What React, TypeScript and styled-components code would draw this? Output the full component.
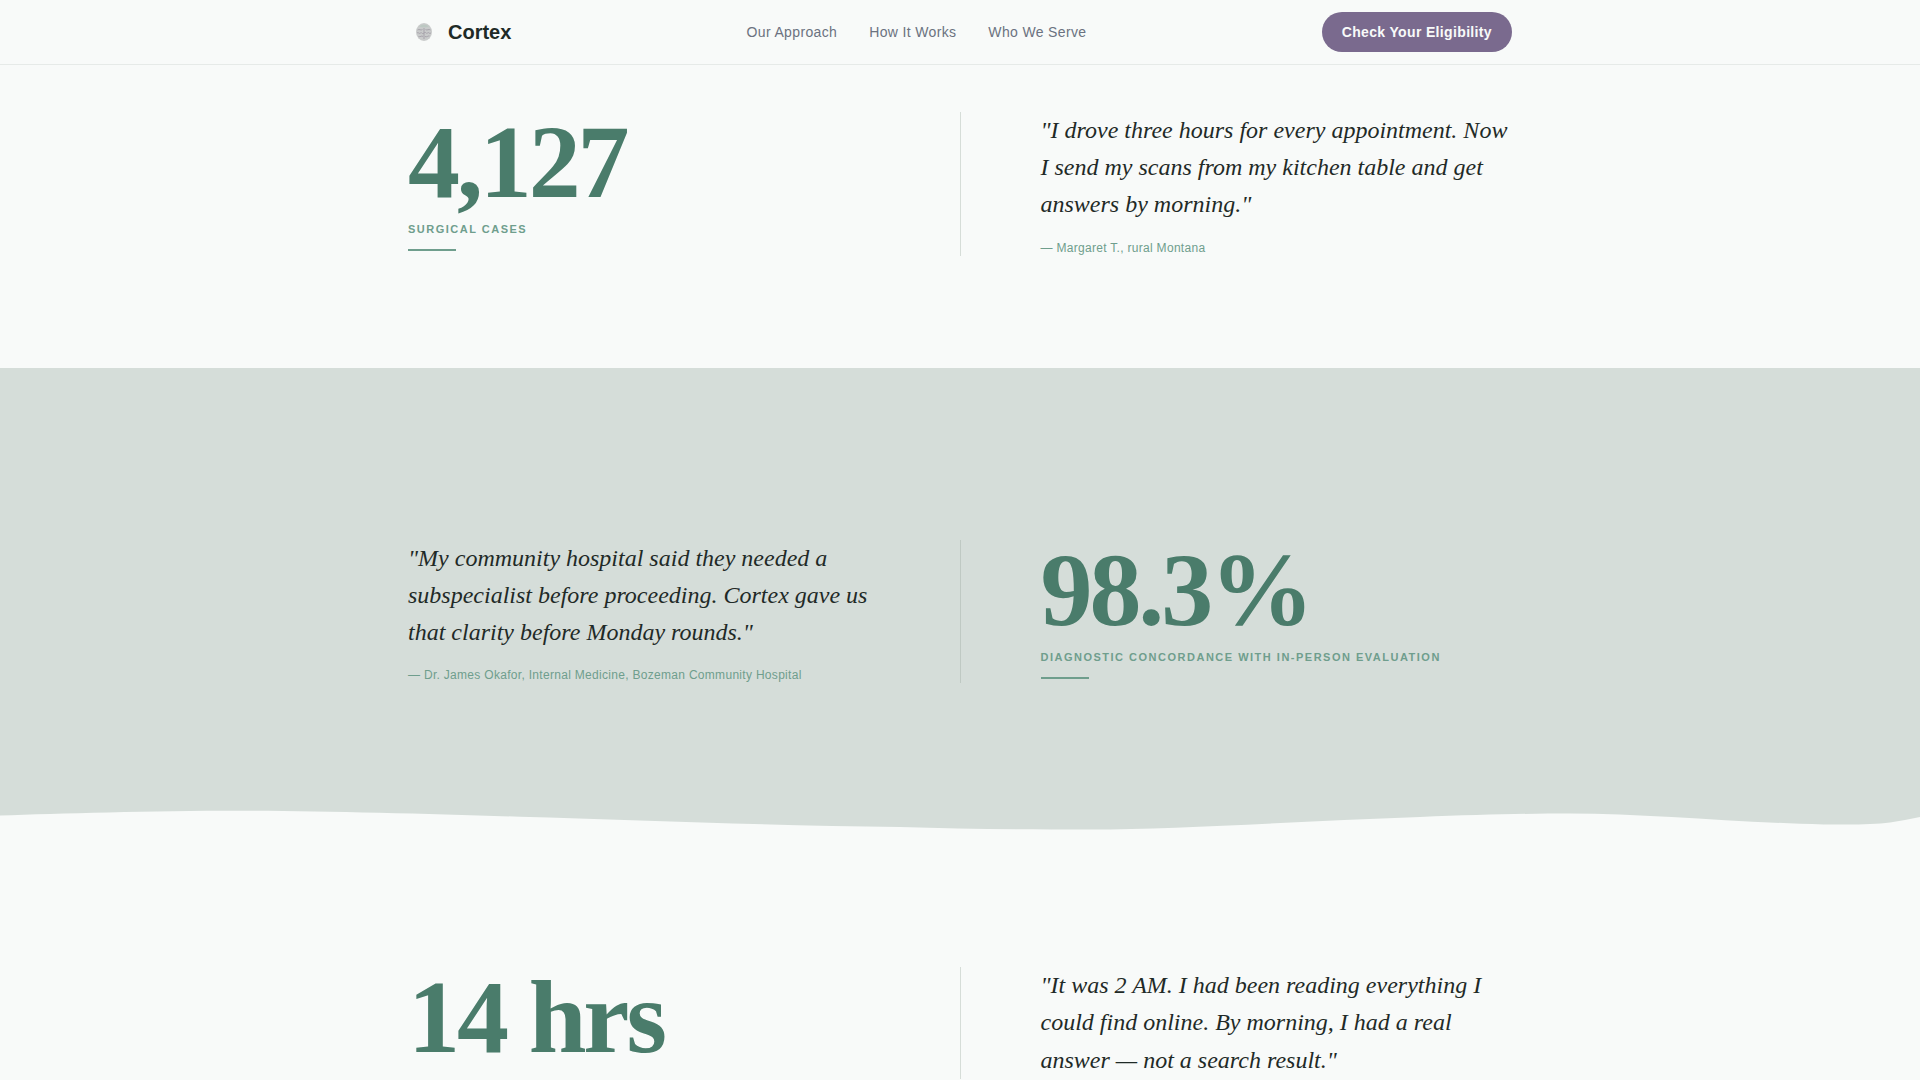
import styled, { createGlobalStyle } from 'styled-components';

const GlobalStyle = createGlobalStyle`
	html, body {
		margin: 0;
		height: 100%;
		overflow: hidden;
		background: #f8faf9;
	}
	* {
		box-sizing: border-box;
	}
`;

const Page = styled.div`
	height: 1080px;
	overflow: hidden;
	background: #f8faf9;
	font-family: 'Liberation Sans', Arial, sans-serif;
`;

const Header = styled.header`
	height: 65px;
	border-bottom: 1px solid #e6eae8;
	background: #f8faf9;
`;

const HeaderInner = styled.div`
	max-width: 1200px;
	height: 64px;
	margin: 0 auto;
	padding: 0 48px;
	display: flex;
	align-items: center;
	justify-content: space-between;
`;

const Logo = styled.a`
	display: flex;
	align-items: center;
	gap: 16px;
	padding-left: 8px;
	font-size: 20px;
	font-weight: 700;
	color: #1f2a27;
`;

const Nav = styled.nav`
	display: flex;
	gap: 32px;
`;

const NavLink = styled.a`
	font-size: 14px;
	letter-spacing: 0.35px;
	color: #6b7280;
`;

const CtaButton = styled.button`
	height: 40px;
	padding: 0 20px;
	border: 0;
	border-radius: 20px;
	background: #7a6a8e;
	color: #f8faf9;
	font-family: inherit;
	font-size: 14px;
	font-weight: 700;
	letter-spacing: 0.35px;
`;

const Section = styled.section<{ $top: number; $bottom: number; $tinted?: boolean }>`
	padding: ${(p) => p.$top}px 0 ${(p) => p.$bottom}px;
	background: ${(p) => (p.$tinted ? '#d5ddd9' : 'transparent')};
`;

const Row = styled.div`
	max-width: 1200px;
	margin: 0 auto;
	padding: 0 48px;
	display: grid;
	grid-template-columns: 1fr 1px 1fr;
	column-gap: 80px;
`;

const Divider = styled.div<{ $tinted?: boolean }>`
	background: ${(p) => (p.$tinted ? '#bfc9c3' : '#d6ddd8')};
`;

const StatNumber = styled.div`
	font-family: 'Liberation Serif', 'Times New Roman', serif;
	font-size: 104px;
	font-weight: 700;
	line-height: 100px;
	letter-spacing: -3.12px;
	white-space: nowrap;
	color: #4a7c6b;
`;

const StatLabel = styled.div`
	margin-top: 9px;
	font-size: 11px;
	font-weight: 700;
	line-height: 16px;
	letter-spacing: 1.5px;
	text-transform: uppercase;
	color: #6f9e8d;
`;

const StatRule = styled.div`
	width: 48px;
	height: 2px;
	margin-top: 12px;
	background: #6f9e8d;
`;

const Quote = styled.blockquote`
	margin: 0;
	font-family: 'Liberation Serif', 'Times New Roman', serif;
	font-size: 24px;
	font-style: italic;
	line-height: 1.55;
	color: #1f2a27;
`;

const Attribution = styled.div`
	margin-top: 16px;
	font-size: 12px;
	line-height: 16px;
	letter-spacing: 0.3px;
	color: #6f9e8d;
`;

const Wave = styled.svg`
	display: block;
	width: 100%;
	height: 30px;
`;

const Stat = ({ value, label }: { value: string; label: string }) => (
	<div>
		<StatNumber>{value}</StatNumber>
		<StatLabel>{label}</StatLabel>
		<StatRule />
	</div>
);

const Testimonial = ({ text, by }: { text: string; by: string }) => (
	<div>
		<Quote>{text}</Quote>
		<Attribution>{by}</Attribution>
	</div>
);

function BrainMark() {
	return (
		<svg width='16' height='18' viewBox='0 0 16 18' aria-hidden='true'>
			<ellipse cx='8' cy='9' rx='8' ry='9' fill='#c9cbcb' />
			<path d='M3 3.5C5 1 11 1 13 3.5C11 4.5 5 4.5 3 3.5Z' fill='#bcc8c2' />
			<g fill='none' stroke='#a49fa8' strokeWidth='0.9'>
				<path d='M1.5 7c2-1.5 3 1 5-.5M9.5 6.500c2 1.500 3-1 5 .5' />
				<path d='M1 10c1.500-1.500 2 1.500 3.500 0s1.500 2 3.500 0 2 1.500 3.500 0 1.500 1.500 3.500 0' />
				<path d='M2.500 13.500c2 1 3-1.500 4.500 0M9 13.500c2 1 3-1 4.500-.5' />
				<path d='M8 5v11' />
			</g>
		</svg>
	);
}

export default function App() {
	return (
		<Page>
			<GlobalStyle />
			<Header>
				<HeaderInner>
					<Logo>
						<BrainMark />
						Cortex
					</Logo>
					<Nav>
						<NavLink>Our Approach</NavLink>
						<NavLink>How It Works</NavLink>
						<NavLink>Who We Serve</NavLink>
					</Nav>
					<CtaButton>Check Your Eligibility</CtaButton>
				</HeaderInner>
			</Header>

			<Section $top={47} $bottom={112}>
				<Row>
					<Stat value='4,127' label='Surgical Cases' />
					<Divider />
					<Testimonial
						text='"I drove three hours for every appointment. Now I send my scans from my kitchen table and get answers by morning."'
						by='— Margaret T., rural Montana'
					/>
				</Row>
			</Section>

			<Section $top={172} $bottom={123} $tinted>
				<Row>
					<Testimonial
						text='"My community hospital said they needed a subspecialist before proceeding. Cortex gave us that clarity before Monday rounds."'
						by='— Dr. James Okafor, Internal Medicine, Bozeman Community Hospital'
					/>
					<Divider $tinted />
					<Stat value='98.3%' label='Diagnostic Concordance with In-Person Evaluation' />
				</Row>
			</Section>
			<Wave viewBox='0 0 1920 30' preserveAspectRatio='none' aria-hidden='true'>
				<path
					d='M0 9.500C60 7.500 150 4.700 240 4.700C320 4.700 430 8 520 10.700C640 14 780 20 900 21C960 23 1020 23.500 1090 23.500C1180 23.500 1300 15 1420 11C1480 8.500 1530 7.500 1570 7.500C1640 7.500 1720 15 1800 17.700C1840 19 1870 19 1890 16.500C1900 15 1910 13 1920 11V0H0Z'
					fill='#d5ddd9'
				/>
			</Wave>

			<Section $top={131} $bottom={0}>
				<Row>
					<StatNumber>14 hrs</StatNumber>
					<Divider />
					<Quote>
						"It was 2 AM. I had been reading everything I could find online. By morning, I had a real answer — not a search result."
					</Quote>
				</Row>
			</Section>
		</Page>
	);
}
